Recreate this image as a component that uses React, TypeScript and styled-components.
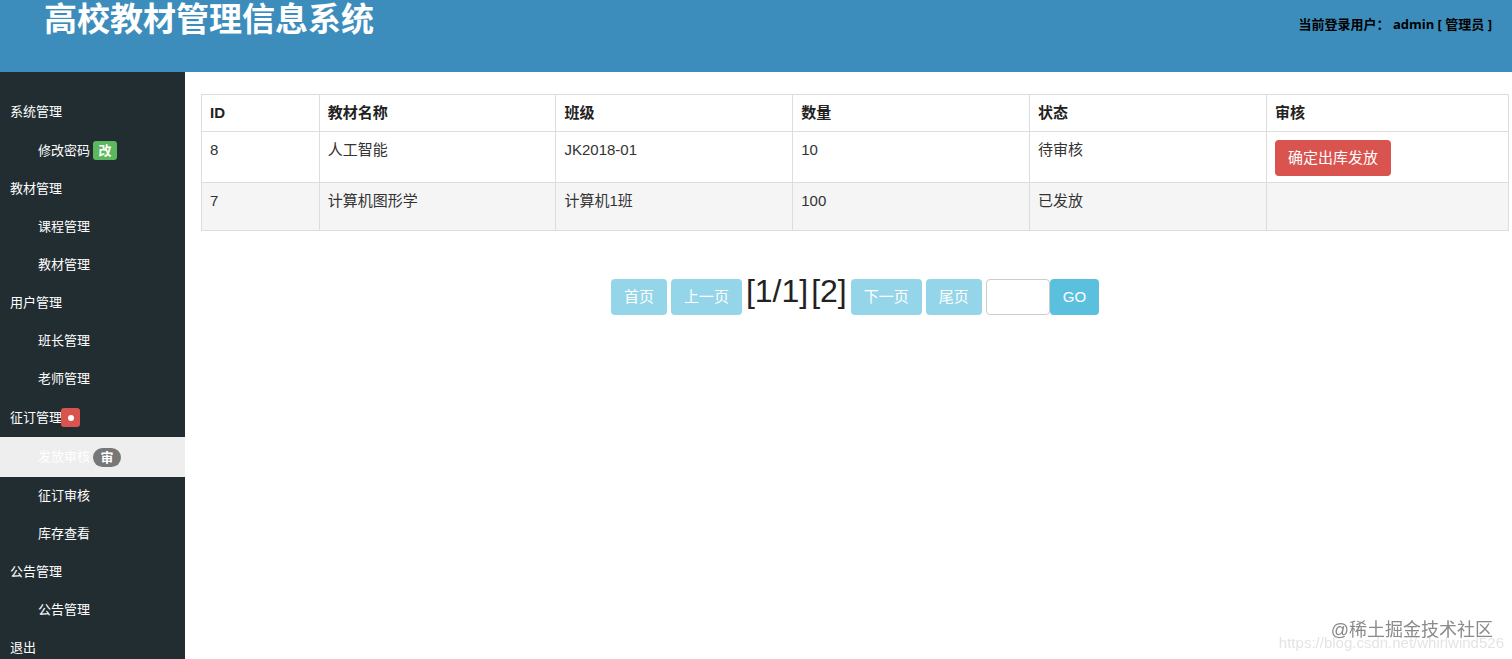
import React from 'react';
import styled, { createGlobalStyle, css } from 'styled-components';

const GlobalStyle = createGlobalStyle`
  *, *::before, *::after { box-sizing: border-box; }
  body {
    margin: 0;
    background: #fff;
    color: #333;
    font-family: "Liberation Sans", "Noto Sans CJK SC", sans-serif;
    font-size: 15px;
    line-height: 21px;
  }
`;

const uiFont = css`
  font-family: "Open Sans", "Noto Sans CJK SC", sans-serif;
`;

const Page = styled.div`
  display: flex;
  flex-direction: column;
  height: 100vh;
  overflow: hidden;
`;

const Header = styled.header`
  display: flex;
  justify-content: space-between;
  align-items: flex-start;
  flex: none;
  height: 72px;
  padding: 0 20px 0 44px;
  background: #3c8dbc;
`;

const Title = styled.h1`
  margin: 0;
  color: #fff;
  font-size: 33px;
  line-height: 40px;
  font-weight: 700;
`;

const CurrentUser = styled.div`
  ${uiFont}
  padding-top: 14px;
  color: #000;
  font-size: 13px;
  line-height: 20px;
  font-weight: 700;
  white-space: pre;
`;

const Body = styled.div`
  display: flex;
  flex: 1;
  min-height: 0;
`;

const Sidebar = styled.nav`
  flex: none;
  width: 185px;
  padding-top: 21px;
  background: #222d32;
  overflow: hidden;
`;

const Menu = styled.ul`
  margin: 0;
  padding: 0;
  list-style: none;
`;

const MenuLink = styled.a<{ $nested?: boolean; $active?: boolean; $tagged?: boolean }>`
  ${uiFont}
  display: flex;
  align-items: center;
  height: ${p => (p.$active ? 40 : p.$tagged ? 39 : 38)}px;
  padding-left: ${p => (p.$nested ? 38 : 10)}px;
  background: ${p => (p.$active ? '#eee' : 'transparent')};
  color: #fff;
  font-size: 13px;
  line-height: 20px;
  text-decoration: none;
`;

const MenuText = styled.span`
  padding-bottom: 2px;
`;

type TagKind = 'success' | 'danger' | 'badge';

const tagColor: Record<TagKind, string> = {
  success: '#5cb85c',
  danger: '#d9534f',
  badge: '#777',
};

const Tag = styled.span<{ $kind: TagKind }>`
  display: flex;
  align-items: center;
  justify-content: center;
  width: ${p => ({ success: 24, danger: 19, badge: 28 })[p.$kind]}px;
  height: 19px;
  margin-left: ${p => (p.$kind === 'danger' ? -1 : 3)}px;
  border-radius: ${p => (p.$kind === 'badge' ? 10 : 3)}px;
  background: ${p => tagColor[p.$kind]};
  font-size: 13px;
  line-height: 19px;
  font-weight: 700;
`;

const Dot = styled.i`
  width: 6px;
  height: 6px;
  border-radius: 50%;
  background: #fff;
`;

const Content = styled.main`
  flex: 1;
  min-width: 0;
  padding: 22px 3px 0 16px;
`;

const Table = styled.table`
  width: 100%;
  table-layout: fixed;
  border-collapse: collapse;

  th, td {
    padding: 8px;
    border: 1px solid #ddd;
    text-align: left;
    vertical-align: top;
    line-height: 20px;
  }
  th { color: #222; }
  tbody tr { height: 48px; }
  tbody tr:nth-child(even) { background: #f5f5f5; }
`;

const Button = styled.button<{ $tone: 'danger' | 'info' }>`
  display: block;
  height: 36px;
  padding: 0 13px;
  border: 0;
  border-radius: 4px;
  background: ${p => (p.$tone === 'danger' ? '#d9534f' : '#5bc0de')};
  color: #fff;
  font: inherit;
  line-height: 36px;
  cursor: pointer;
  &:disabled { opacity: 0.65; cursor: not-allowed; }
  td & { margin-bottom: -2px; }
`;

const Pager = styled.form`
  display: flex;
  justify-content: center;
  align-items: center;
  gap: 4px;
  margin-top: 42px;
`;

const PageNumbers = styled.span`
  display: flex;
  gap: 3px;
  padding-bottom: 12px;
  color: #222;
  font-size: 32px;
  line-height: 36px;
`;

const JumpGroup = styled.div`
  display: flex;
`;

const PageInput = styled.input`
  width: 64px;
  height: 36px;
  padding: 6px 12px;
  border: 1px solid #ccc;
  border-radius: 4px;
  font: inherit;
`;

const Watermark = styled.div`
  position: fixed;
  right: 19px;
  bottom: 17px;
  color: #8a8a8a;
  font-size: 18px;
  line-height: 24px;
  pointer-events: none;
`;

const SourceUrl = styled(Watermark)`
  right: 8px;
  bottom: 6px;
  color: #e4e4e4;
  font-size: 15px;
  line-height: 20px;
`;

interface Item {
  text: string;
  nested?: boolean;
  active?: boolean;
  tag?: { kind: TagKind; text?: string };
}

const menu: Item[] = [
  { text: '系统管理' },
  { text: '修改密码', nested: true, tag: { kind: 'success', text: '改' } },
  { text: '教材管理' },
  { text: '课程管理', nested: true },
  { text: '教材管理', nested: true },
  { text: '用户管理' },
  { text: '班长管理', nested: true },
  { text: '老师管理', nested: true },
  { text: '征订管理', tag: { kind: 'danger' } },
  { text: '发放审核', nested: true, active: true, tag: { kind: 'badge', text: '审' } },
  { text: '征订审核', nested: true },
  { text: '库存查看', nested: true },
  { text: '公告管理' },
  { text: '公告管理', nested: true },
  { text: '退出' },
];

const columns = [
  { title: 'ID', width: '9%' },
  { title: '教材名称', width: '18.12%' },
  { title: '班级', width: '18.12%' },
  { title: '数量', width: '18.12%' },
  { title: '状态', width: '18.12%' },
  { title: '审核', width: '18.52%' },
];

const rows = [
  { id: 8, name: '人工智能', team: 'JK2018-01', count: 10, state: '待审核', pending: true },
  { id: 7, name: '计算机图形学', team: '计算机1班', count: 100, state: '已发放', pending: false },
];

export default function App() {
  return (
    <Page lang="zh-CN">
      <GlobalStyle />
      <Header>
        <Title>高校教材管理信息系统</Title>
        <CurrentUser>当前登录用户： admin [ 管理员 ]</CurrentUser>
      </Header>
      <Body>
        <Sidebar>
          <Menu>
            {menu.map((item, i) => (
              <li key={i}>
                <MenuLink href="#" $nested={item.nested} $active={item.active} $tagged={!!item.tag}>
                  <MenuText>{item.text}</MenuText>
                  {item.tag && <Tag $kind={item.tag.kind}>{item.tag.text ?? <Dot />}</Tag>}
                </MenuLink>
              </li>
            ))}
          </Menu>
        </Sidebar>
        <Content>
          <Table>
            <colgroup>
              {columns.map(c => <col key={c.title} style={{ width: c.width }} />)}
            </colgroup>
            <thead>
              <tr>{columns.map(c => <th key={c.title} scope="col">{c.title}</th>)}</tr>
            </thead>
            <tbody>
              {rows.map(r => (
                <tr key={r.id}>
                  <td>{r.id}</td>
                  <td>{r.name}</td>
                  <td>{r.team}</td>
                  <td>{r.count}</td>
                  <td>{r.state}</td>
                  <td>{r.pending && <Button type="button" $tone="danger">确定出库发放</Button>}</td>
                </tr>
              ))}
            </tbody>
          </Table>
          <Pager onSubmit={e => e.preventDefault()}>
            <Button type="button" $tone="info" disabled>首页</Button>
            <Button type="button" $tone="info" disabled>上一页</Button>
            <PageNumbers>
              <span>[1/1]</span>
              <span>[2]</span>
            </PageNumbers>
            <Button type="button" $tone="info" disabled>下一页</Button>
            <Button type="button" $tone="info" disabled>尾页</Button>
            <JumpGroup>
              <PageInput type="text" aria-label="页码" />
              <Button type="submit" $tone="info">GO</Button>
            </JumpGroup>
          </Pager>
        </Content>
      </Body>
      <SourceUrl>https://blog.csdn.net/whirlwind526</SourceUrl>
      <Watermark>@稀土掘金技术社区</Watermark>
    </Page>
  );
}
